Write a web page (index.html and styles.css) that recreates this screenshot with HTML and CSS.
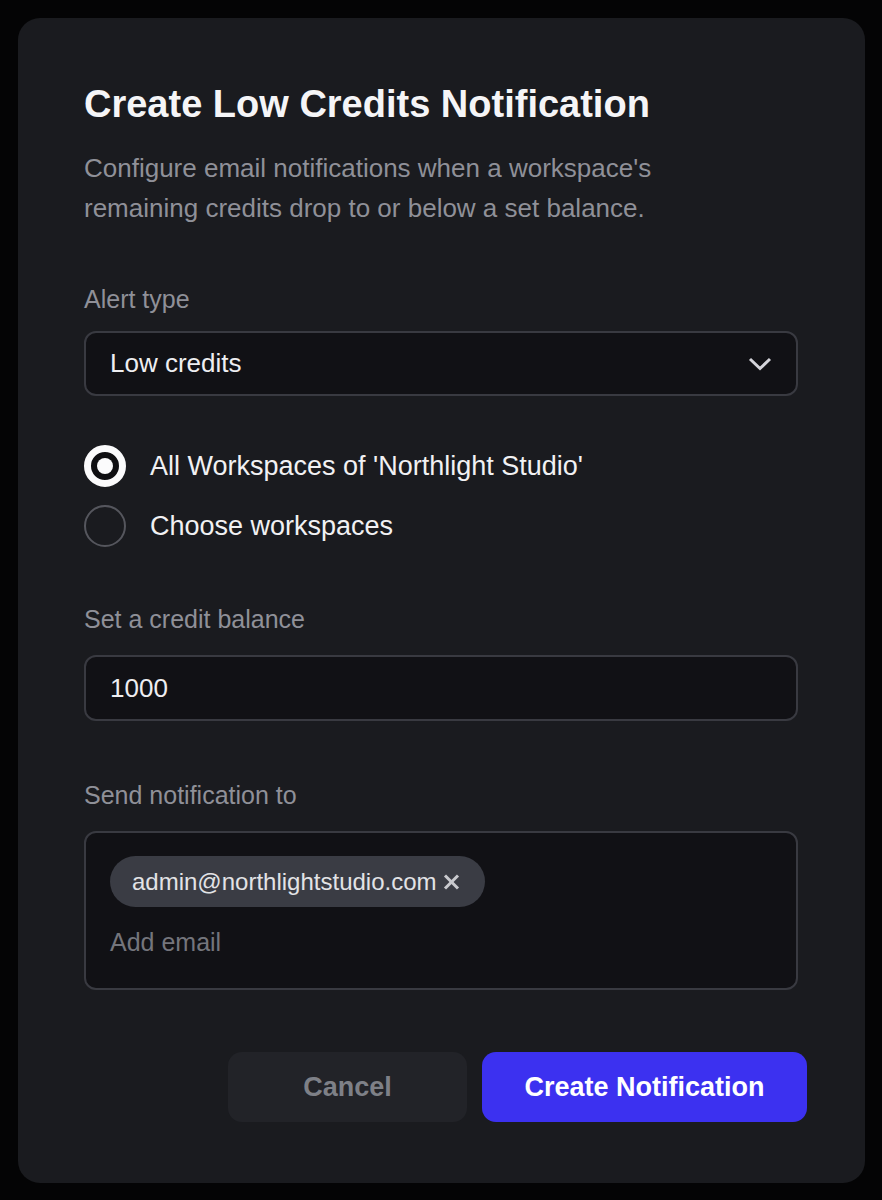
FILE: index.html
```html
<!DOCTYPE html>
<html lang="en">

<head>
    <meta charset="UTF-8">
    <meta name="viewport" content="width=device-width, initial-scale=1.0">
    <title>Create Low Credits Notification</title>
    <link rel="stylesheet" href="styles.css">
</head>

<body>
    <div class="dialog">
        <h1 class="dialog-title">Create Low Credits Notification</h1>
        <p class="dialog-desc">Configure email notifications when a workspace's remaining credits drop to or below a set balance.</p>

        <label class="field-label label-alert">Alert type</label>
        <div class="select">
            <span>Low credits</span>
            <svg class="chevron" width="24" height="14" viewBox="0 0 24 14">
                <polyline points="2,2 12,11.5 22,2" fill="none" stroke="#d4d4da" stroke-width="3" />
            </svg>
        </div>

        <div class="radios">
            <div class="radio-row">
                <span class="radio checked"></span>
                <span class="radio-text">All Workspaces of 'Northlight Studio'</span>
            </div>
            <div class="radio-row">
                <span class="radio"></span>
                <span class="radio-text">Choose workspaces</span>
            </div>
        </div>

        <label class="field-label label-balance">Set a credit balance</label>
        <div class="input">1000</div>

        <label class="field-label label-send">Send notification to</label>
        <div class="tags">
            <div class="chip">
                <span>admin@northlightstudio.com</span>
                <svg class="chip-x" width="17" height="16" viewBox="0 0 17 16">
                    <line x1="2" y1="1.5" x2="15" y2="14.5" stroke="#c9cace" stroke-width="3" />
                    <line x1="15" y1="1.5" x2="2" y2="14.5" stroke="#c9cace" stroke-width="3" />
                </svg>
            </div>
            <div class="add-email">Add email</div>
        </div>

        <div class="actions">
            <button class="btn btn-cancel">Cancel</button>
            <button class="btn btn-primary">Create Notification</button>
        </div>
    </div>
</body>

</html>
```

FILE: styles.css
```css
/* dialog for low credit alerts */
body {
    margin: 0;
    padding: 18px;
    background: #040405;
    font-family: "Liberation Sans", Arial, sans-serif;
}

.dialog {
    width: 847px;
    box-sizing: border-box;
    padding: 64px 67px 61px 66px;
    background: #1a1b1f;
    border-radius: 22px;
    display: flex;
    flex-direction: column;
}

.dialog-title {
    margin: 0;
    font-size: 38px;
    line-height: 44px;
    font-weight: bold;
    color: #f5f5f7;
}

.dialog-desc {
    margin: 22px 0 0;
    width: 600px;
    font-size: 26px;
    line-height: 40px;
    color: #8f9098;
}

.field-label {
    display: block;
    font-size: 25px;
    line-height: 30px;
    color: #8f9098;
}

.label-alert {
    margin-top: 56px;
}

.label-balance {
    margin-top: 57px;
}

.label-send {
    margin-top: 59px;
}

.select,
.input {
    box-sizing: border-box;
    height: 65px;
    border: 2px solid #393a41;
    border-radius: 12px;
    background: #111115;
    padding: 0 24px;
    display: flex;
    align-items: center;
    font-size: 26px;
    color: #eeeef1;
}

.select {
    margin-top: 17px;
    justify-content: space-between;
}

.input {
    margin-top: 21px;
    height: 66px;
}

.radios {
    margin-top: 49px;
    display: flex;
    flex-direction: column;
    gap: 18px;
}

.radio-row {
    display: flex;
    align-items: center;
    gap: 24px;
}

.radio {
    box-sizing: border-box;
    width: 42px;
    height: 42px;
    border-radius: 50%;
    border: 2px solid #55565d;
    flex-shrink: 0;
}

.radio.checked {
    border: 7px solid #fbfbfc;
    background: #0f0f12;
    display: flex;
    align-items: center;
    justify-content: center;
}

.radio.checked::after {
    content: "";
    width: 16px;
    height: 16px;
    border-radius: 50%;
    background: #fbfbfc;
}

.radio-text {
    font-size: 27px;
    color: #f1f1f3;
}

.tags {
    margin-top: 21px;
    box-sizing: border-box;
    height: 159px;
    border: 2px solid #393a41;
    border-radius: 12px;
    background: #111115;
    padding: 23px 24px;
    display: flex;
    flex-direction: column;
    align-items: flex-start;
}

.chip {
    height: 51px;
    box-sizing: border-box;
    padding: 0 25px 0 22px;
    border-radius: 26px;
    background: #3a3c44;
    display: flex;
    align-items: center;
    gap: 6px;
    font-size: 24px;
    color: #e2e3e6;
}

.add-email {
    margin-top: 20px;
    font-size: 25px;
    line-height: 30px;
    color: #74757c;
}

.actions {
    margin-top: 62px;
    margin-right: -9px;
    display: flex;
    justify-content: flex-end;
    gap: 15px;
}

.btn {
    height: 70px;
    border: none;
    border-radius: 14px;
    font-family: "Liberation Sans", Arial, sans-serif;
    font-size: 27px;
    font-weight: bold;
}

.btn-cancel {
    width: 239px;
    background: #222328;
    color: #7e8087;
}

.btn-primary {
    width: 325px;
    background: #3c31f0;
    color: #ffffff;
}
```
